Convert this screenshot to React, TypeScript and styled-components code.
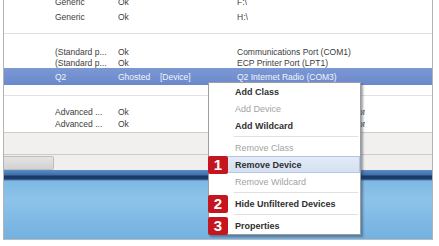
import * as React from 'react';
import styled, { createGlobalStyle } from 'styled-components';

const GlobalStyle = createGlobalStyle`
	html,
	body {
		margin: 0;
		padding: 0;
		background: #ffffff;
	}
`;

const Screen = styled.div`
	position: relative;
	width: 439px;
	height: 246px;
	overflow: hidden;
	background: #ffffff;
	font-family: 'Liberation Sans', Arial, sans-serif;
`;

const Frame = styled.div`
	margin-left: 3px;
	width: 428px;
	height: 239px;
	display: flex;
	flex-direction: column;
	border-left: 1px solid #b4b4b4;
	border-right: 1px solid #b4b4b4;
	border-bottom: 1px solid #b8bcc4;
	overflow: hidden;
`;

const ListView = styled.div`
	height: 132px;
	flex: none;
	background: #ffffff;
	border-bottom: 1px solid #cdcdcd;
	overflow: hidden;
`;

const Group = styled.div<{ $top: number; $bottom: number; $line?: boolean }>`
	padding-top: ${p => Math.max(p.$top, 0)}px;
	margin-top: ${p => Math.min(p.$top, 0)}px;
	padding-bottom: ${p => p.$bottom}px;
	border-bottom: ${p => (p.$line ? '1px solid #e2e2e2' : 'none')};
`;

const Row = styled.div<{ $h: number; $selected?: boolean }>`
	height: ${p => p.$h}px;
	display: flex;
	align-items: center;
	padding-left: 51px;
	font-size: 8.5px;
	white-space: nowrap;
	color: ${p => (p.$selected ? '#f2f5fc' : '#3c3c3c')};
	background: ${p => (p.$selected ? 'linear-gradient(#7c98d4, #6a89cc)' : 'transparent')};
`;

const Cell = styled.span<{ $w?: number }>`
	flex: none;
	width: ${p => (p.$w ? `${p.$w}px` : 'auto')};
	overflow: hidden;
`;

const Panel = styled.div`
	height: 21px;
	flex: none;
	background: #f1f0ee;
	border-bottom: 1px solid #cbcbcb;
`;

const ScrollStrip = styled.div`
	height: 15px;
	flex: none;
	display: flex;
	align-items: center;
	background: #f0efed;
`;

const Thumb = styled.div`
	width: 49px;
	height: 12px;
	background: linear-gradient(#e4e4e4, #d2d2d2);
	border: 1px solid #bdbdbd;
	border-left: none;
	border-radius: 0 2px 2px 0;
`;

const Desktop = styled.div`
	flex: 1;
	background: linear-gradient(
		to bottom,
		#5b8cc4 0px,
		#3f6ea9 5px,
		#193763 6px,
		#1d3f6e 9px,
		#7fb9e4 11px,
		#8cc3ea 30px,
		#73b1e0 100%
	);
`;

const Menu = styled.div`
	position: absolute;
	left: 208px;
	top: 82px;
	width: 151px;
	display: flex;
	flex-direction: column;
	background: #ffffff;
	border: 1px solid #9e9e9e;
	box-shadow: 2px 2px 2px rgba(40, 50, 70, 0.45);
	font-size: 9px;
`;

const Item = styled.div<{ $disabled?: boolean; $active?: boolean }>`
	height: 17px;
	display: flex;
	align-items: center;
	white-space: nowrap;
	color: ${p => (p.$disabled ? '#a3a3a3' : '#303030')};
	font-weight: ${p => (p.$disabled ? 400 : 700)};
	background: ${p => (p.$active ? 'linear-gradient(#e3ebf7, #d3e0f2)' : 'transparent')};
	box-shadow: ${p => (p.$active ? 'inset 0 0 0 1px #b3c7e4' : 'none')};
`;

const Gutter = styled.div`
	width: 26px;
	height: 100%;
	flex: none;
	display: flex;
	align-items: center;
`;

const Badge = styled.div`
	width: 20px;
	height: 18px;
	margin-left: -1px;
	display: flex;
	align-items: center;
	justify-content: center;
	background: #c5161f;
	border-radius: 2px;
	color: #ffffff;
	font-size: 15px;
	font-weight: 700;
	font-family: 'Liberation Sans', Arial, sans-serif;
`;

const Separator = styled.div`
	height: 5px;
	display: flex;
	align-items: center;
	padding-left: 25px;
	padding-right: 2px;

	&::after {
		content: '';
		flex: 1;
		height: 1px;
		background: #e0e0e0;
	}
`;

type ListRow = { a: string; b: string; c: string; h: number; selected?: boolean; extra?: string };

const groups: { top: number; bottom: number; line: boolean; rows: ListRow[] }[] = [
	{
		top: -6,
		bottom: 9,
		line: true,
		rows: [
			{ a: 'Generic', b: 'Ok', c: 'F:\\', h: 15 },
			{ a: 'Generic', b: 'Ok', c: 'H:\\', h: 15 },
		],
	},
	{
		top: 12,
		bottom: 10,
		line: true,
		rows: [
			{ a: '(Standard p...', b: 'Ok', c: 'Communications Port (COM1)', h: 11 },
			{ a: '(Standard p...', b: 'Ok', c: 'ECP Printer Port (LPT1)', h: 11 },
			{ a: 'Q2', b: 'Ghosted', extra: '[Device]', c: 'Q2 Internet Radio (COM3)', h: 17, selected: true },
		],
	},
	{
		top: 10,
		bottom: 0,
		line: false,
		rows: [
			{ a: 'Advanced ...', b: 'Ok', c: 'AMD Phenom(tm) II X4 Processor', h: 12 },
			{ a: 'Advanced ...', b: 'Ok', c: 'AMD Phenom(tm) II X4 Processor', h: 12 },
		],
	},
];

type MenuEntry =
	| { sep: true }
	| { sep?: false; label: string; disabled?: boolean; active?: boolean; badge?: string };

const menu: MenuEntry[] = [
	{ label: 'Add Class' },
	{ label: 'Add Device', disabled: true },
	{ label: 'Add Wildcard' },
	{ sep: true },
	{ label: 'Remove Class', disabled: true },
	{ label: 'Remove Device', active: true, badge: '1' },
	{ label: 'Remove Wildcard', disabled: true },
	{ sep: true },
	{ label: 'Hide Unfiltered Devices', badge: '2' },
	{ sep: true },
	{ label: 'Properties', badge: '3' },
];

const App: React.FunctionComponent = () => {
	return (
		<Screen>
			<GlobalStyle />
			<Frame>
				<ListView>
					{groups.map((g, gi) => (
						<Group key={gi} $top={g.top} $bottom={g.bottom} $line={g.line}>
							{g.rows.map((r, ri) => (
								<Row key={ri} $h={r.h} $selected={r.selected}>
									<Cell $w={63}>{r.a}</Cell>
									{r.extra ? (
										<>
											<Cell $w={42}>{r.b}</Cell>
											<Cell $w={77}>{r.extra}</Cell>
										</>
									) : (
										<Cell $w={119}>{r.b}</Cell>
									)}
									<Cell>{r.c}</Cell>
								</Row>
							))}
						</Group>
					))}
				</ListView>
				<Panel />
				<ScrollStrip>
					<Thumb />
				</ScrollStrip>
				<Desktop />
			</Frame>

			<Menu>
				{menu.map((m, i) =>
					m.sep ? (
						<Separator key={i} />
					) : (
						<Item key={i} $disabled={m.disabled} $active={m.active}>
							<Gutter>{m.badge && <Badge>{m.badge}</Badge>}</Gutter>
							{m.label}
						</Item>
					)
				)}
			</Menu>
		</Screen>
	);
};

export default App;
